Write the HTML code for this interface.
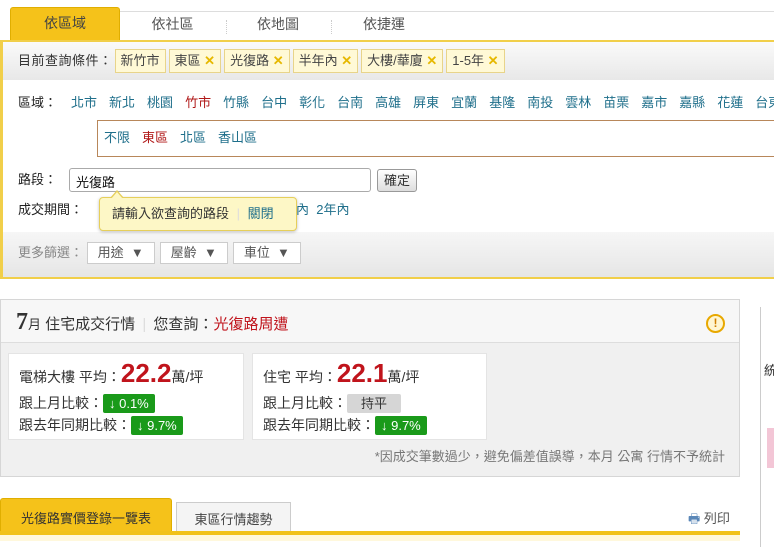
<!DOCTYPE html>
<html><head><meta charset="utf-8"><style>
*{box-sizing:border-box;margin:0;padding:0}
body{width:774px;height:541px;overflow:hidden;background:#fff;font-family:"Liberation Sans","Noto Sans CJK TC",sans-serif;font-size:13px;color:#333;position:relative}
.a{position:absolute}
.tab{position:absolute;top:12px;height:28px;line-height:24px;text-align:center;font-size:14px;color:#555}
.tag{display:inline-block;height:24px;line-height:22px;border:1px solid #e8d48a;background:#fff9d6;padding:0 5px;margin-right:3px;color:#444;font-size:13px}
.x{color:#e6b800;font-weight:bold}
a{color:#1f6f8b;text-decoration:none;margin-right:12px}
.red{color:#b01818}
.sel{display:inline-block;height:22px;line-height:20px;border:1px solid #ccc;background:#fff;padding:0 10px;margin-right:5px;color:#555}
.card{position:absolute;top:353px;height:87px;background:#fff;border:1px solid #e4e4e4;padding:6px 10px;font-size:14px}
.big{color:#c0141c;font-size:26px;font-weight:bold}
.g{display:inline-block;background:#1a9a1a;color:#fff;padding:0 6px;height:19px;line-height:19px;border-radius:2px;font-size:13px}
</style></head><body>
<div class="a" style="left:120px;top:11px;width:654px;border-top:1px solid #ddd"></div>
<div class="tab" style="left:10px;width:110px;top:7px;height:33px;line-height:30px;background:#f5c21a;border:1px solid #e0ae00;border-bottom:none;border-radius:3px 3px 0 0;color:#444;font-size:14px">依區域</div>
<div class="tab" style="left:120px;width:105px">依社區</div>
<div class="tab" style="left:225px;width:106px">依地圖</div>
<div class="tab" style="left:331px;width:106px">依捷運</div>
<div class="a" style="left:226px;top:20px;height:14px;border-left:1px dotted #ccc"></div>
<div class="a" style="left:331px;top:20px;height:14px;border-left:1px dotted #ccc"></div>
<div class="a" style="left:0;top:40px;width:774px;height:239px;border:3px solid #f1cf4a;border-right:none;border-top-width:2px"></div>
<div class="a" style="left:3px;top:42px;width:771px;height:38px;background:linear-gradient(#fafafa,#e8e8e8)"></div>
<div class="a" style="left:18px;top:49px;font-size:13px;line-height:24px;white-space:nowrap"><span style="letter-spacing:0.5px;margin-right:2px">目前查詢條件：</span><span class="tag">新竹市</span><span class="tag">東區 <span class="x">✕</span></span><span class="tag">光復路 <span class="x">✕</span></span><span class="tag">半年內 <span class="x">✕</span></span><span class="tag">大樓/華廈 <span class="x">✕</span></span><span class="tag">1-5年 <span class="x">✕</span></span></div>
<div class="a" style="left:18px;top:94px;white-space:nowrap;line-height:18px"><b style="font-weight:normal;color:#222;margin-right:14px">區域：</b><a>北市</a><a>新北</a><a>桃園</a><a class="red">竹市</a><a>竹縣</a><a>台中</a><a>彰化</a><a>台南</a><a>高雄</a><a>屏東</a><a>宜蘭</a><a>基隆</a><a>南投</a><a>雲林</a><a>苗栗</a><a>嘉市</a><a>嘉縣</a><a>花蓮</a><a>台東</a></div>
<div class="a" style="left:97px;top:120px;width:680px;height:37px;border:1px solid #b8875a;padding:8px 6px;line-height:18px;white-space:nowrap"><a>不限</a><a class="red">東區</a><a>北區</a><a>香山區</a></div>
<div class="a" style="left:18px;top:171px;line-height:18px;color:#222">路段：</div>
<div class="a" style="left:69px;top:168px;width:302px;height:24px;border:1px solid #aaa;border-radius:3px;padding:3px 6px;color:#111">光復路</div>
<div class="a" style="left:377px;top:169px;width:40px;height:23px;border:1px solid #999;border-radius:3px;background:linear-gradient(#fff,#ddd);text-align:center;line-height:21px;color:#333">確定</div>
<div class="a" style="left:18px;top:201px;line-height:18px;color:#222">成交期間：</div>
<div class="a" style="left:296px;top:201px;line-height:18px;color:#1f6f8b">內&nbsp;&nbsp;2年內</div>
<div class="a" style="left:3px;top:232px;width:771px;height:45px;background:linear-gradient(#f6f6f6,#e6e6e6)"></div>
<div class="a" style="left:18px;top:242px;color:#888;line-height:22px">更多篩選：&nbsp;<span class="sel">用途 &nbsp;▼</span><span class="sel">屋齡 &nbsp;▼</span><span class="sel">車位 &nbsp;▼</span></div>
<div class="a" style="left:99px;top:197px;width:198px;height:34px;background:#fdf7c6;border:1px solid #e6cf5a;border-radius:4px;box-shadow:0 1px 3px rgba(0,0,0,.25);line-height:32px;padding-left:12px;font-size:13px;color:#333">請輸入欲查詢的路段 <span style="color:#ddd;margin:0 4px">|</span> <span style="color:#1f6f8b">關閉</span></div>
<div class="a" style="left:110px;top:190px;width:0;height:0;border-left:7px solid transparent;border-right:7px solid transparent;border-bottom:8px solid #e6cf5a"></div>
<div class="a" style="left:111px;top:192px;width:0;height:0;border-left:6px solid transparent;border-right:6px solid transparent;border-bottom:7px solid #fdf7c6"></div>

<div class="a" style="left:0;top:299px;width:740px;height:178px;border:1px solid #d6d6d6;background:#f0f0f0"></div>
<div class="a" style="left:1px;top:300px;width:738px;height:43px;background:#f7f7f7;border-bottom:1px solid #ddd"></div>
<div class="a" style="left:16px;top:305px;line-height:34px;font-size:15px;color:#333"><span style="font-size:24px;font-weight:bold;font-family:'Liberation Serif',serif">7</span><span style="font-size:13px">月</span> 住宅成交行情 <span style="color:#ddd;margin:0 3px">|</span> 您查詢：<span style="color:#c0141c">光復路周遭</span></div>
<div class="a" style="left:706px;top:314px;width:19px;height:19px;border:2px solid #e8a800;border-radius:50%;background:#fff6d0;text-align:center;line-height:15px;font-size:12px;font-weight:bold;color:#d08000">!</div>
<div class="card" style="left:8px;width:236px"><div style="line-height:26px">電梯大樓 平均：<span class="big">22.2</span>萬/坪</div><div style="line-height:22px;margin-top:2px">跟上月比較：<span class="g">↓ 0.1%</span></div><div style="line-height:22px">跟去年同期比較：<span class="g">↓ 9.7%</span></div></div>
<div class="card" style="left:252px;width:235px"><div style="line-height:26px">住宅 平均：<span class="big">22.1</span>萬/坪</div><div style="line-height:22px;margin-top:2px">跟上月比較：<span class="g" style="background:#d6d6d6;color:#333;padding:0 14px">持平</span></div><div style="line-height:22px">跟去年同期比較：<span class="g">↓ 9.7%</span></div></div>
<div class="a" style="left:300px;width:425px;text-align:right;top:448px;font-size:13px;color:#777;line-height:18px;white-space:nowrap">*因成交筆數過少，避免偏差值誤導，本月 公寓 行情不予統計</div>

<div class="a" style="left:760px;top:307px;width:20px;height:240px;border-left:1px solid #ccc"></div>
<div class="a" style="left:764px;top:360px;font-size:13px;color:#333">統</div>
<div class="a" style="left:767px;top:428px;width:7px;height:40px;background:#f3c6d6"></div>

<div class="a" style="left:0;top:498px;width:172px;height:36px;background:#f5c21a;border:1px solid #e0ae00;border-bottom:none;border-radius:3px 3px 0 0;text-align:center;line-height:40px;color:#333">光復路實價登錄一覽表</div>
<div class="a" style="left:176px;top:502px;width:115px;height:30px;background:#f4f4f4;border:1px solid #ccc;border-bottom:none;text-align:center;line-height:34px;color:#444">東區行情趨勢</div>
<div class="a" style="left:688px;top:510px;color:#555;line-height:18px"><span style="color:#5a87b8">🖶</span> 列印</div>
<div class="a" style="left:0;top:531px;width:740px;height:4px;background:#f1c21a"></div>
<div class="a" style="left:0;top:535px;width:740px;height:6px;background:#fff8dc"></div>
</body></html>
